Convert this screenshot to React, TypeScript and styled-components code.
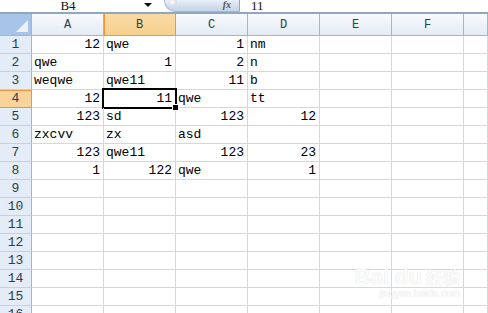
import React from "react";
import styled, { createGlobalStyle, css } from "styled-components";

type Cell = { v: string; num?: boolean };

const COLS = ["A", "B", "C", "D", "E", "F"];

const n = (v: string): Cell => ({ v, num: true });
const t = (v: string): Cell => ({ v });

const DATA: Cell[][] = [
  [n("12"), t("qwe"), n("1"), t("nm")],
  [t("qwe"), n("1"), n("2"), t("n")],
  [t("weqwe"), t("qwe11"), n("11"), t("b")],
  [n("12"), n("11"), t("qwe"), t("tt")],
  [n("123"), t("sd"), n("123"), n("12")],
  [t("zxcvv"), t("zx"), t("asd")],
  [n("123"), t("qwe11"), n("123"), n("23")],
  [n("1"), n("122"), t("qwe"), n("1")],
];

const ROWS = 16;
const SEL = { row: 4, col: 1 };

const Global = createGlobalStyle`
  body {
    margin: 0;
    background: #fff;
    overflow: hidden;
  }
`;

const Page = styled.div`
  width: 488px;
  height: 313px;
  overflow: hidden;
  position: relative;
  font-family: "Liberation Mono", "DejaVu Sans Mono", monospace;
`;

const FormulaBar = styled.div`
  display: flex;
  align-items: flex-end;
  height: 12px;
  border-bottom: 2px solid #90a7c2;
`;

const NameBox = styled.div`
  width: 136px;
  font-family: "Liberation Serif", serif;
  font-size: 13px;
  line-height: 12px;
  color: #111;
  text-align: center;
  padding-right: 4px;
`;

const Arrow = styled.div`
  width: 0;
  height: 0;
  margin: 0 6px 5px 4px;
  border-left: 4px solid transparent;
  border-right: 4px solid transparent;
  border-top: 4px solid #111;
`;

const Pill = styled.div`
  position: relative;
  display: flex;
  align-items: center;
  justify-content: flex-end;
  width: 66px;
  height: 12px;
  margin-left: 6px;
  padding: 0 8px 0 0;
  border-radius: 0 0 0 12px;
  border-left: 1px solid #a7b8cf;
  border-bottom: 1px solid #a7b8cf;
  border-right: 1px solid #9aa6b6;
  background: linear-gradient(#eef3fa, #d3deed 60%, #c6d4e8);
  &::before {
    content: "";
    position: absolute;
    left: 4px;
    top: 0;
    width: 8px;
    height: 7px;
    border-radius: 50%;
    background: radial-gradient(circle at 40% 40%, #fff, #c7ccd4);
  }
`;

const Fx = styled.span`
  font-family: "Liberation Serif", serif;
  font-style: italic;
  font-weight: bold;
  font-size: 10px;
  color: #555;
  line-height: 12px;
`;

const FormulaText = styled.div`
  padding-left: 11px;
  font-family: "Liberation Serif", serif;
  font-size: 13px;
  line-height: 12px;
  color: #111;
`;

const Grid = styled.div`
  display: grid;
  grid-template-columns: 32px repeat(6, 72px) 1fr;
  grid-template-rows: 22px;
  grid-auto-rows: 18px;
`;

const Corner = styled.div`
  position: relative;
  background: #a9c4e9;
  border-right: 1px solid #9eb6ce;
  border-bottom: 1px solid #9eb6ce;
  &::after {
    content: "";
    position: absolute;
    right: 3px;
    bottom: 3px;
    border-left: 12px solid transparent;
    border-bottom: 12px solid #eef3fb;
  }
`;

const ColHead = styled.div<{ $active?: boolean }>`
  display: flex;
  align-items: center;
  justify-content: center;
  font-size: 12px;
  color: #27414f;
  background: ${(p) =>
    p.$active
      ? "linear-gradient(#f9dba6, #f6cf8c)"
      : "linear-gradient(#f8fafd, #e4ebf5)"};
  border-right: 1px solid ${(p) => (p.$active ? "#f29536" : "#9eb6ce")};
  border-bottom: 1px solid ${(p) => (p.$active ? "#f29536" : "#9eb6ce")};
  ${(p) => p.$active && "box-shadow: inset 1px 0 0 #f29536;"}
`;

const RowHead = styled.div<{ $active?: boolean }>`
  display: flex;
  align-items: flex-end;
  justify-content: center;
  padding-bottom: 1px;
  font-size: 13px;
  color: #27414f;
  background: ${(p) => (p.$active ? "#f8d39a" : "#e4ecf7")};
  border-right: 1px solid ${(p) => (p.$active ? "#f29536" : "#9eb6ce")};
  border-bottom: 1px solid ${(p) => (p.$active ? "#f29536" : "#c5d1e2")};
  ${(p) => p.$active && "box-shadow: inset 0 1px 0 #f29536;"}
`;

const DataCell = styled.div<{ $num?: boolean; $sel?: boolean }>`
  position: relative;
  display: flex;
  align-items: flex-end;
  justify-content: ${(p) => (p.$num ? "flex-end" : "flex-start")};
  padding: 0 3px 1px 2px;
  font-size: 13px;
  color: #000;
  white-space: nowrap;
  border-right: 1px solid #d0d7e5;
  border-bottom: 1px solid #d0d7e5;
  ${(p) =>
    p.$sel &&
    css`
      &::after {
        content: "";
        position: absolute;
        left: -2px;
        top: -2px;
        right: -2px;
        bottom: -2px;
        border: 2px solid #000;
        pointer-events: none;
      }
      &::before {
        content: "";
        position: absolute;
        right: -4px;
        bottom: -4px;
        width: 5px;
        height: 5px;
        background: #000;
        border: 1px solid #fff;
        z-index: 2;
      }
    `}
`;

const Mark = styled.div`
  position: absolute;
  right: 28px;
  bottom: 13px;
  display: flex;
  flex-direction: column;
  align-items: flex-end;
  color: rgba(255, 255, 255, 0.9);
  text-shadow: 0 0 1px rgba(150, 150, 150, 0.4);
  pointer-events: none;
`;

const MarkTitle = styled.div`
  font-family: "Liberation Sans", sans-serif;
  font-weight: bold;
  font-size: 22px;
  line-height: 22px;
  span {
    font-family: "Noto Sans CJK SC", sans-serif;
    font-size: 17px;
    margin-left: 4px;
  }
`;

const MarkUrl = styled.div`
  font-family: "Liberation Sans", sans-serif;
  font-size: 10px;
  line-height: 12px;
`;

export default function App() {
  return (
    <Page>
      <Global />
      <FormulaBar>
        <NameBox>B4</NameBox>
        <Arrow />
        <Pill>
          <Fx>fx</Fx>
        </Pill>
        <FormulaText>11</FormulaText>
      </FormulaBar>
      <Grid>
        <Corner />
        {COLS.map((c, i) => (
          <ColHead key={c} $active={i === SEL.col}>
            {c}
          </ColHead>
        ))}
        <ColHead />
        {Array.from({ length: ROWS }, (_, r) => (
          <React.Fragment key={r}>
            <RowHead $active={r + 1 === SEL.row}>{r + 1}</RowHead>
            {Array.from({ length: 7 }, (_, c) => {
              const cell = DATA[r]?.[c];
              return (
                <DataCell
                  key={c}
                  $num={cell?.num}
                  $sel={r + 1 === SEL.row && c === SEL.col}
                >
                  {cell?.v}
                </DataCell>
              );
            })}
          </React.Fragment>
        ))}
      </Grid>
      <Mark>
        <MarkTitle>
          Bai du<span>经验</span>
        </MarkTitle>
        <MarkUrl>jingyan.baidu.com</MarkUrl>
      </Mark>
    </Page>
  );
}
